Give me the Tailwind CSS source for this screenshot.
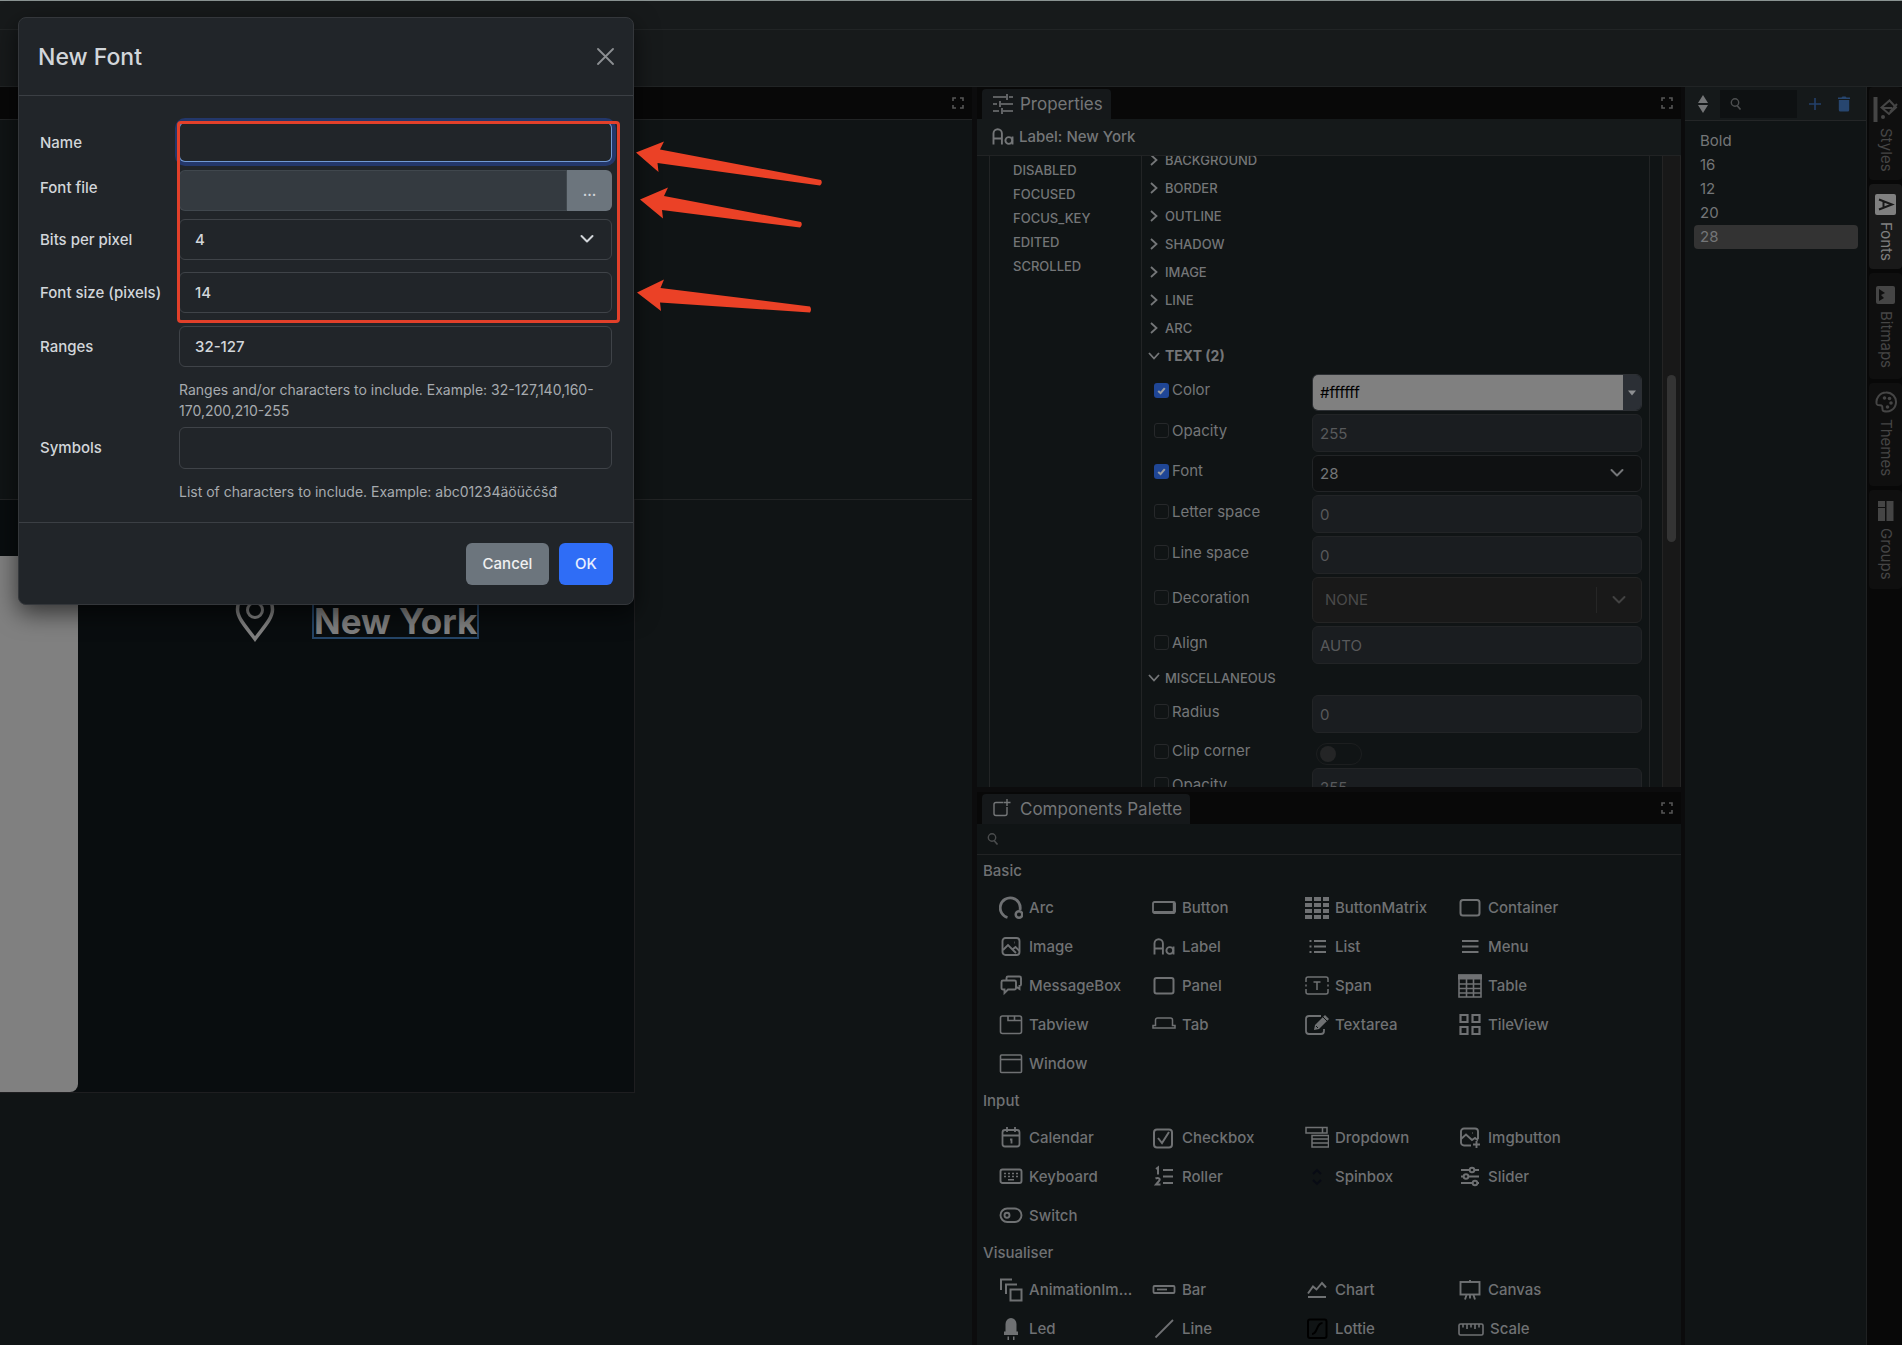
<!DOCTYPE html>
<html lang="en">
<head>
<meta charset="utf-8">
<title>New Font</title>
<script src="https://cdn.jsdelivr.net/npm/@tailwindcss/browser@4"></script>
</head>
<body class="h-screen overflow-hidden bg-[#101415] font-['Inter',sans-serif] text-[15px] leading-6 text-[#747678]">

<svg class="hidden" aria-hidden="true">
  <symbol id="expand" viewBox="0 0 12 12"><path d="M1 4V1h3M8 1h3v3M11 8v3H8M4 11H1V8" fill="none" stroke="currentColor" stroke-width="1.6"/></symbol>
  <symbol id="chev-r" viewBox="0 0 12 12"><path d="M3 1l5.500 5L3 11" fill="none" stroke="currentColor" stroke-width="1.8"/></symbol>
  <symbol id="chev-d" viewBox="0 0 12 12"><path d="M1 3l5 5.500L11 3" fill="none" stroke="currentColor" stroke-width="1.8"/></symbol>
  <symbol id="chev-select" viewBox="0 0 16 16"><path d="M2.500 5l5.500 5.500L13.500 5" fill="none" stroke="currentColor" stroke-width="2" stroke-linecap="round" stroke-linejoin="round"/></symbol>
  <symbol id="search" viewBox="0 0 12 12"><circle cx="5" cy="4.500" r="3.700" fill="none" stroke="currentColor" stroke-width="1.400"/><path d="M7 7.500l3.500 4" stroke="currentColor" stroke-width="1.600"/></symbol>
  <symbol id="label" viewBox="0 0 24 24"><path d="M2.500 19.500V8.500a4.200 4.200 0 0 1 8.400 0v11M2.500 13.500h8.400M21.500 11.500v8" fill="none" stroke="currentColor" stroke-width="1.900"/><circle cx="17.800" cy="15.500" r="3.400" fill="none" stroke="currentColor" stroke-width="1.900"/></symbol>
  <symbol id="check" viewBox="0 0 16 16"><path d="M4.500 8.500l2.500 2.300L11.500 5.500" fill="none" stroke="currentColor" stroke-width="2.200"/></symbol>
</svg>

<div class="flex h-full flex-col border-t border-[#8a9392]">
  <header class="shrink-0 bg-[#171a1b]">
    <div class="h-[29px] border-b border-[#212425]"></div>
    <div class="h-[57px] border-b border-[#212425]"></div>
  </header>

  <main class="flex min-h-0 flex-1">

    <!-- Page editor -->
    <section class="flex min-w-0 flex-1 flex-col">
      <div class="flex h-8 shrink-0 items-center justify-end bg-[#080808] pr-2"><button aria-label="Maximize" class="text-[#565656]"><svg class="size-3"><use href="#expand"/></svg></button></div>
      <div class="h-[381px] shrink-0 border-y border-[#222425]"></div>
      <div class="relative flex-1 overflow-hidden">
        <div class="absolute left-0 top-0 h-[593px] w-[635px] border-b border-r border-[#1e1e20] bg-[#090d0f]">
          <div class="absolute left-0 top-14 h-[536px] w-[78px] rounded-br-lg bg-[#808080]"></div>
          <svg class="absolute left-[235px] top-[90px] h-[52px] w-10 text-[#808080]" viewBox="0 0 40 52"><path d="M20 49C13 39 2.500 29 2.500 19.500a17.500 17.500 0 0 1 35 0C37.500 29 27 39 20 49z" fill="none" stroke="currentColor" stroke-width="3.500"/><circle cx="20" cy="20" r="7.500" fill="none" stroke="currentColor" stroke-width="3"/></svg>
          <div class="absolute left-[312px] top-[101px] h-[38px] border-2 border-[#254567] text-[35px] font-bold leading-9 text-[#808080]">New York</div>
        </div>
      </div>
    </section>

    <div class="w-[5px] shrink-0 bg-[#0c0c0d]"></div>

    <!-- Properties and components -->
    <section class="flex w-[704px] shrink-0 flex-col">
      <div class="flex h-8 shrink-0 items-end bg-[#080808] pl-[5px]">
        <div class="flex h-[30px] items-center gap-1.5 rounded-t bg-[#15181a] pl-2.5 pr-2 text-[17px]">
          <svg class="size-[22px]" viewBox="0 0 22 22"><path d="M1 4h13M17 4h4M15 1v6M1 11h4M9 11h12M8 8v6M1 18h6M11 18h10M10 15v6" fill="none" stroke="currentColor" stroke-width="1.600"/></svg>
          Properties
        </div>
        <button aria-label="Maximize" class="mb-2.5 ml-auto mr-2 text-[#565656]"><svg class="size-3"><use href="#expand"/></svg></button>
      </div>
      <div class="flex h-[37px] shrink-0 items-center gap-1 border-b border-[#212324] bg-[#15191a] pl-3.5 font-medium"><svg class="size-6"><use href="#label"/></svg>Label: New York</div>

      <div class="flex h-[631px] shrink-0 overflow-hidden">
        <ul class="ml-3 w-[153px] shrink-0 border-x border-[#222425] pl-[23px] pt-0.5 text-[13px] font-medium leading-6">
          <li>DISABLED</li><li>FOCUSED</li><li>FOCUS_KEY</li><li>EDITED</li><li>SCROLLED</li>
        </ul>
        <div class="min-w-0 flex-1 border-r border-[#222425] pr-[7px]">
          <div class="-mt-2.5 pl-1.5 text-[13px] font-medium leading-7">
            <div class="flex items-center gap-[5px]"><svg class="size-3"><use href="#chev-r"/></svg>BACKGROUND</div>
            <div class="flex items-center gap-[5px]"><svg class="size-3"><use href="#chev-r"/></svg>BORDER</div>
            <div class="flex items-center gap-[5px]"><svg class="size-3"><use href="#chev-r"/></svg>OUTLINE</div>
            <div class="flex items-center gap-[5px]"><svg class="size-3"><use href="#chev-r"/></svg>SHADOW</div>
            <div class="flex items-center gap-[5px]"><svg class="size-3"><use href="#chev-r"/></svg>IMAGE</div>
            <div class="flex items-center gap-[5px]"><svg class="size-3"><use href="#chev-r"/></svg>LINE</div>
            <div class="flex items-center gap-[5px]"><svg class="size-3"><use href="#chev-r"/></svg>ARC</div>
            <div class="flex items-center gap-[5px] text-sm font-bold leading-7"><svg class="size-3"><use href="#chev-d"/></svg>TEXT (2)</div>
          </div>
          <div class="flex flex-col gap-[3px] pl-3 pt-1">
            <div class="flex h-[37px] items-center">
              <label class="flex w-[158px] items-center gap-[3px] pb-[5px]"><span class="relative size-[15px]"><input type="checkbox" checked class="block size-[15px] appearance-none rounded-[3px] bg-[#1f4696]"><svg class="absolute inset-0 size-[15px] text-[#9a9da2]"><use href="#check"/></svg></span>Color</label>
              <div class="flex h-full flex-1 overflow-hidden rounded-md border border-[#2c2f33]"><input aria-label="Color value" value="#ffffff" class="min-w-0 flex-1 bg-[#808080] pl-[7px] text-black"><button aria-label="Pick color" class="flex w-[18px] items-center justify-center bg-[#2b2f35] text-[#8d8f92]"><svg class="size-2" viewBox="0 0 8 8"><path d="M0 1.500h8L4 6.500z" fill="currentColor"/></svg></button></div>
            </div>
            <div class="flex h-[38px] items-center">
              <label class="flex w-[158px] items-center gap-[3px] pb-[5px]"><input type="checkbox" class="size-[15px] appearance-none rounded-[3px] border border-[#26282a]">Opacity</label>
              <input aria-label="Opacity value" value="255" disabled class="h-full min-w-0 flex-1 rounded-md border border-[#222426] bg-[#1a1d20] pl-[7px] text-[#58595b]">
            </div>
            <div class="flex h-[37px] items-center">
              <label class="flex w-[158px] items-center gap-[3px] pb-[5px]"><span class="relative size-[15px]"><input type="checkbox" checked class="block size-[15px] appearance-none rounded-[3px] bg-[#1f4696]"><svg class="absolute inset-0 size-[15px] text-[#9a9da2]"><use href="#check"/></svg></span>Font</label>
              <div class="relative h-full flex-1"><select aria-label="Font value" class="h-full w-full appearance-none rounded-md border border-[#222426] bg-[#0f1112] pl-[7px]"><option>28</option></select><svg class="pointer-events-none absolute right-[17px] top-2.5 size-4"><use href="#chev-select"/></svg></div>
            </div>
            <div class="flex h-[38px] items-center">
              <label class="flex w-[158px] items-center gap-[3px] pb-[5px]"><input type="checkbox" class="size-[15px] appearance-none rounded-[3px] border border-[#26282a]">Letter space</label>
              <input aria-label="Letter space value" value="0" disabled class="h-full min-w-0 flex-1 rounded-md border border-[#222426] bg-[#1a1d20] pl-[7px] text-[#58595b]">
            </div>
            <div class="flex h-[38px] items-center">
              <label class="flex w-[158px] items-center gap-[3px] pb-[5px]"><input type="checkbox" class="size-[15px] appearance-none rounded-[3px] border border-[#26282a]">Line space</label>
              <input aria-label="Line space value" value="0" disabled class="h-full min-w-0 flex-1 rounded-md border border-[#222426] bg-[#1a1d20] pl-[7px] text-[#58595b]">
            </div>
            <div class="flex h-[46px] items-center">
              <label class="flex w-[158px] items-center gap-[3px] pb-[5px]"><input type="checkbox" class="size-[15px] appearance-none rounded-[3px] border border-[#26282a]">Decoration</label>
              <div class="relative h-full flex-1"><select aria-label="Decoration value" disabled class="h-full w-full appearance-none rounded-md border border-[#242424] bg-[#191919] pl-3 text-[#4a4a4a] opacity-100"><option>NONE</option></select><span class="pointer-events-none absolute inset-y-2.5 right-[45px] w-px bg-[#262626]"></span><svg class="pointer-events-none absolute right-[15px] top-[15px] size-4 text-[#424242]"><use href="#chev-select"/></svg></div>
            </div>
            <div class="flex h-[38px] items-center">
              <label class="flex w-[158px] items-center gap-[3px] pb-[5px]"><input type="checkbox" class="size-[15px] appearance-none rounded-[3px] border border-[#26282a]">Align</label>
              <input aria-label="Align value" value="AUTO" disabled class="h-full min-w-0 flex-1 rounded-md border border-[#222426] bg-[#1a1d20] pl-[7px] text-[#58595b]">
            </div>
          </div>
          <div class="flex items-center gap-[5px] pl-1.5 text-[13px] font-medium leading-7"><svg class="size-3"><use href="#chev-d"/></svg>MISCELLANEOUS</div>
          <div class="flex flex-col gap-[3px] pl-3 pt-[3px]">
            <div class="flex h-[38px] items-center">
              <label class="flex w-[158px] items-center gap-[3px] pb-[5px]"><input type="checkbox" class="size-[15px] appearance-none rounded-[3px] border border-[#26282a]">Radius</label>
              <input aria-label="Radius value" value="0" disabled class="h-full min-w-0 flex-1 rounded-md border border-[#222426] bg-[#1a1d20] pl-[7px] text-[#58595b]">
            </div>
            <div class="flex h-[29px] items-end">
              <label class="flex w-[158px] items-center gap-[3px] pb-0.5"><input type="checkbox" class="size-[15px] appearance-none rounded-[3px] border border-[#26282a]">Clip corner</label>
              <span class="relative ml-1 h-[22px] w-[46px]"><input type="checkbox" aria-label="Clip corner value" disabled class="block h-full w-full appearance-none rounded-full border border-[#1c1e1f]"><span class="absolute left-1 top-[3px] size-4 rounded-full bg-[#242526]"></span></span>
            </div>
            <div class="flex h-[38px] items-center">
              <label class="flex w-[158px] items-center gap-[3px] pb-[5px]"><input type="checkbox" class="size-[15px] appearance-none rounded-[3px] border border-[#26282a]">Opacity</label>
              <input aria-label="Opacity value" value="255" disabled class="h-full min-w-0 flex-1 rounded-md border border-[#222426] bg-[#1a1d20] pl-[7px] text-[#58595b]">
            </div>
          </div>
        </div>
        <div class="ml-3 w-[19px] shrink-0 border-x border-[#242424] bg-[#181818] px-1 pt-[219px]"><div class="h-[167px] rounded-full bg-[#343434]"></div></div>
      </div>

      <div class="h-[5px] shrink-0 bg-[#0c0c0d]"></div>
      <div class="flex h-8 shrink-0 items-end bg-[#080808] pl-[5px]">
        <div class="flex h-[30px] items-center gap-1.5 rounded-t bg-[#15181a] pl-2.5 pr-2 text-[17px]">
          <svg class="size-[22px]" viewBox="0 0 22 22"><path d="M11 4.500H4a2 2 0 0 0-2 2v9a2 2 0 0 0 2 2h9a2 2 0 0 0 2-2V9M15 1v7M11.500 4.500h7" fill="none" stroke="currentColor" stroke-width="1.400"/></svg>
          Components Palette
        </div>
        <button aria-label="Maximize" class="mb-2.5 ml-auto mr-2 text-[#565656]"><svg class="size-3"><use href="#expand"/></svg></button>
      </div>
      <div class="flex h-[31px] shrink-0 items-center gap-2 border-b border-[#212324] pl-2.5"><svg class="size-3 text-[#4a4c4d]"><use href="#search"/></svg><input aria-label="Search components" class="min-w-0 flex-1 bg-transparent"></div>

      <div class="min-h-0 flex-1 overflow-hidden font-medium text-[#6f7173]">
        <h3 class="h-[33px] pl-1.5 leading-8">Basic</h3>
        <ul class="grid grid-cols-[repeat(4,153px)] pb-0.5 pl-[22px] leading-[39px]">
          <li class="flex items-center gap-1.5"><svg class="size-6" viewBox="0 0 24 24" fill="none" stroke="currentColor" stroke-width="2.800"><path d="M8.500 21.500A10 10 0 1 1 21 14"/><circle cx="20" cy="18.500" r="3.300" stroke-width="2.500"/></svg>Arc</li>
          <li class="flex items-center gap-1.5"><svg class="size-6" viewBox="0 0 24 24" fill="none" stroke="currentColor"><rect x="1" y="6" width="22" height="11" rx="1.500" stroke-width="1.800"/><path d="M2 16.500h20.500M22.300 7v9" stroke-width="3"/></svg>Button</li>
          <li class="flex items-center gap-1.5"><svg class="size-6" viewBox="0 0 24 24" stroke="currentColor" stroke-width="4"><path d="M0 3h7M9 3h7M18 3h6M0 9h7M9 9h7M18 9h6M0 15h7M9 15h7M18 15h6M0 21h7M9 21h7M18 21h6"/></svg>ButtonMatrix</li>
          <li class="flex items-center gap-1.5"><svg class="size-6" viewBox="0 0 24 24" fill="none" stroke="currentColor" stroke-width="2"><rect x="2.500" y="4" width="19" height="15.500" rx="2.500"/></svg>Container</li>
          <li class="flex items-center gap-1.5"><svg class="size-6" viewBox="0 0 24 24" fill="none" stroke="currentColor" stroke-width="1.900"><rect x="3.500" y="3" width="17" height="17" rx="3"/><path d="M4 15l5-5 8 8M14 14l2.500-2 4 4M15 7.500h.500"/></svg>Image</li>
          <li class="flex items-center gap-1.5"><svg class="size-6"><use href="#label"/></svg>Label</li>
          <li class="flex items-center gap-1.5"><svg class="size-6" viewBox="0 0 24 24" stroke="currentColor" stroke-width="2"><path d="M9 6h12M9 11.500h12M9 17h12M4.500 6h2M4.500 11.500h2M4.500 17h2"/></svg>List</li>
          <li class="flex items-center gap-1.5"><svg class="size-6" viewBox="0 0 24 24" stroke="currentColor" stroke-width="2"><path d="M4 6h16.500M4 11.500h16.500M4 17h16.500"/></svg>Menu</li>
          <li class="flex items-center gap-1.5"><svg class="size-6" viewBox="0 0 24 24" fill="none" stroke="currentColor" stroke-width="1.900"><path d="M4 6.500h11.500a1.500 1.500 0 0 1 1.500 1.500v6a1.500 1.500 0 0 1-1.500 1.500H9L5.500 19v-3.500H4A1.500 1.500 0 0 1 2.500 14V8A1.500 1.500 0 0 1 4 6.500zM7.500 6V4A1.500 1.500 0 0 1 9 2.500h11.500A1.500 1.500 0 0 1 22 4v6.500a1.500 1.500 0 0 1-1.500 1.500v3l-3-2"/></svg>MessageBox</li>
          <li class="flex items-center gap-1.5"><svg class="size-6" viewBox="0 0 24 24" fill="none" stroke="currentColor" stroke-width="2"><rect x="2.500" y="4" width="19" height="15.500" rx="2"/></svg>Panel</li>
          <li class="flex items-center gap-1.5"><svg class="size-6" viewBox="0 0 24 24" fill="none" stroke="currentColor" stroke-width="1.500"><path d="M1 8V5a2 2 0 0 1 2-2h18a2 2 0 0 1 2 2v3M1 15v3a2 2 0 0 0 2 2h18a2 2 0 0 0 2-2v-3M1 10.500v2M23 10.500v2M8.500 8h7M12 8v8"/></svg>Span</li>
          <li class="flex items-center gap-1.5"><svg class="size-6" viewBox="0 0 24 24" fill="none" stroke="currentColor" stroke-width="1.600"><path d="M1 1h22v22H1zM1 10h22M1 14.500h22M1 19h22M8.500 5v18M15.500 5v18"/><path d="M0 3h24" stroke-width="5"/></svg>Table</li>
          <li class="flex items-center gap-1.5"><svg class="size-6" viewBox="0 0 24 24" fill="none" stroke="currentColor" stroke-width="1.600"><rect x="1.500" y="3" width="21" height="17.500" rx="2"/><path d="M9 3v4.500h13.500M15.500 3v4.500"/></svg>Tabview</li>
          <li class="flex items-center gap-1.5"><svg class="size-6" viewBox="0 0 24 24" fill="none" stroke="currentColor" stroke-width="1.500"><path d="M3.500 12.500V7a2 2 0 0 1 2-2h13a2 2 0 0 1 2 2v5.500h2.500V15H1v-2.500z"/></svg>Tab</li>
          <li class="flex items-center gap-1.5"><svg class="size-6" viewBox="0 0 24 24" fill="none" stroke="currentColor" stroke-width="1.800"><path d="M16 3H4a3 3 0 0 0-3 3v12a3 3 0 0 0 3 3h12a3 3 0 0 0 3-3v-2"/><path d="M9 17l1-5L20 2l4 4-10 10z" fill="currentColor" stroke="none"/><path d="M18 4l4 4M11 13l2 2" stroke="#101415" stroke-width="1"/></svg>Textarea</li>
          <li class="flex items-center gap-1.5"><svg class="size-6" viewBox="0 0 24 24" fill="none" stroke="currentColor" stroke-width="2.200"><path d="M2.500 2h7v7h-7zM14.500 2h7v7h-7zM2.500 14h7v7h-7zM14.500 14h7v7h-7z"/></svg>TileView</li>
          <li class="flex items-center gap-1.5"><svg class="size-6" viewBox="0 0 24 24" fill="none" stroke="currentColor" stroke-width="1.600"><rect x="1.500" y="3" width="21" height="17.500" rx="1"/><path d="M1.500 7.500h21"/></svg>Window</li>
        </ul>
        <h3 class="h-[33px] pl-1.5 leading-8">Input</h3>
        <ul class="grid grid-cols-[repeat(4,153px)] pb-0.5 pl-[22px] leading-[39px]">
          <li class="flex items-center gap-1.5"><svg class="size-6" viewBox="0 0 24 24" fill="none" stroke="currentColor" stroke-width="1.800"><rect x="3.500" y="4" width="17" height="16.500" rx="2.500"/><path d="M3.500 9.500h17M8 1v5M16 1v5M11 13.500h1.500v4"/></svg>Calendar</li>
          <li class="flex items-center gap-1.5"><svg class="size-6" viewBox="0 0 24 24" fill="none" stroke="currentColor" stroke-width="2"><rect x="2" y="3.500" width="18" height="18" rx="3"/><path d="M6 12l4 5 7-11"/></svg>Checkbox</li>
          <li class="flex items-center gap-1.5"><svg class="size-6" viewBox="0 0 24 24" fill="none" stroke="currentColor" stroke-width="1.500"><path d="M1 1.500h21v5.500H1zM17.500 2v5M7 9.500h16.500V21H7zM7 13h16.500M7 17h16.500"/></svg>Dropdown</li>
          <li class="flex items-center gap-1.5"><svg class="size-6" viewBox="0 0 24 24" fill="none" stroke="currentColor" stroke-width="1.900"><path d="M13 19.500H6a3 3 0 0 1-3-3v-11a3 3 0 0 1 3-3h11a3 3 0 0 1 3 3V13M3 13l5-4.500L14 14l3-2 3 2.500M14.500 7h.500M18.500 15v7M15 18.500h7"/></svg>Imgbutton</li>
          <li class="flex items-center gap-1.5"><svg class="size-6" viewBox="0 0 24 24" fill="none" stroke="currentColor" stroke-width="1.900"><rect x="1.500" y="4.500" width="21" height="13.500" rx="2"/><path d="M5 8.500h2M9 8.500h2M13 8.500h2M17 8.500h2M5 11.500h2M9 11.500h2M13 11.500h2M17 11.500h2M9 14.800h6" stroke-width="1.600"/></svg>Keyboard</li>
          <li class="flex items-center gap-1.5"><svg class="size-6" viewBox="0 0 24 24" fill="none" stroke="currentColor" stroke-width="1.800"><path d="M11 5h10M11 11.500h10M11 18h10"/><path d="M4 4l2-1.500V9.500M3.500 13.500c3-1.500 5.500.500 3.500 2.500l-3 3.500h4.500" stroke-width="2"/></svg>Roller</li>
          <li class="flex items-center gap-1.5"><svg class="size-6" viewBox="0 0 24 24" fill="none" stroke="#080b14" stroke-width="1.800"><path d="M8 9l4-4 4 4M8 15l4 4 4-4"/></svg>Spinbox</li>
          <li class="flex items-center gap-1.5"><svg class="size-6" viewBox="0 0 24 24" fill="none" stroke="currentColor" stroke-width="1.900"><path d="M3 5h8M17 5h4M3 11.500h2M11 11.500h10M3 18h11M20 18h1"/><circle cx="14" cy="5" r="2.300"/><circle cx="8" cy="11.500" r="2.300"/><circle cx="17" cy="18" r="2.300"/></svg>Slider</li>
          <li class="flex items-center gap-1.5"><svg class="size-6" viewBox="0 0 24 24" fill="none" stroke="currentColor" stroke-width="1.900"><rect x="1.500" y="4.500" width="21" height="13.500" rx="6.700"/><circle cx="8" cy="11.200" r="2.500"/></svg>Switch</li>
        </ul>
        <h3 class="h-[33px] pl-1.5 leading-8">Visualiser</h3>
        <ul class="grid grid-cols-[repeat(4,153px)] pb-0.5 pl-[22px] leading-[39px]">
          <li class="flex items-center gap-1.5"><svg class="size-6" viewBox="0 0 24 24" fill="none" stroke="currentColor" stroke-width="2"><path d="M11.500 11.500h11v11h-11zM7 16V6.500h11M2 12V1.500h11"/></svg>AnimationIm...</li>
          <li class="flex items-center gap-1.5"><svg class="size-6" viewBox="0 0 24 24" fill="none" stroke="currentColor" stroke-width="1.800"><rect x="1.500" y="8" width="21" height="7" rx="1"/><path d="M5 11.500h10"/></svg>Bar</li>
          <li class="flex items-center gap-1.5"><svg class="size-6" viewBox="0 0 24 24" fill="none" stroke="currentColor" stroke-width="1.900"><path d="M3 15.500l5-7 3.500 3L17 5l4 4.500M3 19h18"/></svg>Chart</li>
          <li class="flex items-center gap-1.5"><svg class="size-6" viewBox="0 0 24 24" fill="none" stroke="currentColor" stroke-width="1.900"><rect x="2.500" y="4" width="19" height="12.500"/><path d="M12 2v2M8.500 17l-1.500 4.500M15.500 17l1.500 4.500M12 17v3.500"/></svg>Canvas</li>
          <li class="flex items-center gap-1.5"><svg class="size-6" viewBox="0 0 24 24" fill="currentColor"><path d="M6.500 14.500V7a5.500 6 0 0 1 11 0v7.500h1.500V18H5v-3.500zM8.500 19.500H10V23H8.500zM14 19.500h1.500V23H14z"/></svg>Led</li>
          <li class="flex items-center gap-1.5"><svg class="size-6" viewBox="0 0 24 24" stroke="currentColor" stroke-width="1.800"><path d="M3.500 20.500L21 3"/></svg>Line</li>
          <li class="flex items-center gap-1.5"><svg class="size-6" viewBox="0 0 24 24" fill="none" stroke="#000" stroke-width="2"><rect x="3" y="2.500" width="18.500" height="18.500" rx="2"/><path d="M7 17c6 0 4-11 10.500-11"/></svg>Lottie</li>
          <li class="flex items-center gap-1.5"><svg class="h-6 w-[26px]" viewBox="0 0 26 24" fill="none" stroke="currentColor" stroke-width="1.600"><rect x="1" y="7" width="24" height="11" rx="1.500"/><path d="M5 7v3.500M9 7v5M13 7v3.500M17 7v5M21 7v3.500"/></svg>Scale</li>
        </ul>
      </div>
    </section>

    <div class="w-1 shrink-0 bg-[#0b0b0c]"></div>

    <!-- Font list -->
    <section class="flex w-[182px] shrink-0 flex-col border-r border-[#1f2122]">
      <div class="flex h-[34px] shrink-0 items-center border-b border-[#242627] bg-[#15191a] pl-2">
        <button aria-label="Sort" class="flex w-[27px] items-center pl-1"><svg class="h-5 w-3" viewBox="0 0 12 20" fill="currentColor"><path d="M6 1l5 8H1zM6 19l5-8H1z"/></svg></button>
        <div class="flex h-7 w-[77px] items-center bg-[#0e1112] pl-2.5 text-[#4d4f50]"><svg class="size-3"><use href="#search"/></svg><input aria-label="Search fonts" class="min-w-0 flex-1 bg-transparent"></div>
        <button aria-label="Add font" class="ml-3 text-[#23406b]"><svg class="size-3" viewBox="0 0 12 12"><path d="M6 0v12M0 6h12" stroke="currentColor" stroke-width="1.600"/></svg></button>
        <button aria-label="Delete font" class="ml-4 text-[#27466f]"><svg class="h-4 w-3.5" viewBox="0 0 14 16" fill="currentColor"><path d="M1 1.500h3.500L5.500.500h3l1 1H13V3H1zM1.800 4h10.400v10a1.500 1.500 0 0 1-1.500 1.500H3.300A1.500 1.500 0 0 1 1.800 14z"/></svg></button>
      </div>
      <ul class="pl-[9px] pr-2 pt-2 leading-6">
        <li class="rounded px-1.5">Bold</li>
        <li class="rounded px-1.5">16</li>
        <li class="rounded px-1.5">12</li>
        <li class="rounded px-1.5">20</li>
        <li class="rounded bg-[#333] px-1.5">28</li>
      </ul>
    </section>

    <!-- Vertical tabs -->
    <nav class="flex w-[35px] shrink-0 flex-col gap-1 bg-[#080808] pl-0.5 text-[#454545]">
      <button class="flex h-[93px] items-center gap-1.5 rounded bg-[#0f0f0f] pt-2.5 [writing-mode:vertical-rl]"><svg class="size-[25px]" viewBox="0 0 25 25" fill="none" stroke="currentColor" stroke-width="2"><path d="M2.500 0v25" stroke-width="4"/><path d="M8.500 10.500l8-7 6.500 7-7 6.500zM17 15l7-8M10 11h9"/><circle cx="10" cy="20" r="2" fill="currentColor" stroke="none"/></svg>Styles</button>
      <button class="flex h-[85px] items-center gap-1.5 rounded bg-[#191919] pt-2.5 text-[#808080] [writing-mode:vertical-rl]"><svg class="size-[22px]" viewBox="0 0 22 22"><rect width="21" height="21" rx="2" fill="currentColor"/><path d="M4 5.500l13 5-13 5M8.500 7.500v6" fill="none" stroke="#191919" stroke-width="2"/></svg>Fonts</button>
      <button class="flex h-[106px] items-center gap-1.5 rounded bg-[#0f0f0f] pt-3 [writing-mode:vertical-rl]"><svg class="size-5" viewBox="0 0 20 20"><rect y="1" width="19" height="18" rx="2" fill="currentColor"/><path d="M3 4v12l5-3-3-3 4-2z" fill="#0f0f0f"/></svg>Bitmaps</button>
      <button class="flex h-[103px] items-center gap-1.5 rounded bg-[#0f0f0f] pt-2 [writing-mode:vertical-rl]"><svg class="size-[22px]" viewBox="0 0 22 22" fill="none" stroke="currentColor" stroke-width="2"><path d="M11 1.500A9.500 9.500 0 1 1 8.500 20c-2-1-.500-3.500-1.500-5s-4.500.500-5.300-2A9.500 9.500 0 0 1 11 1.500z"/><g fill="currentColor" stroke="none"><circle cx="9.500" cy="7" r="1.800"/><circle cx="14.500" cy="7.500" r="1.800"/><circle cx="16" cy="12" r="1.800"/><circle cx="12.500" cy="16" r="1.800"/></g></svg>Themes</button>
      <button class="flex h-[99px] items-center gap-1.5 rounded bg-[#0f0f0f] pt-2.5 [writing-mode:vertical-rl]"><svg class="size-[22px]" viewBox="0 0 22 22" fill="currentColor"><path d="M3 1h7v6H3zM3 8h7v13H3zM11.500 1h7v20h-7z"/></svg>Groups</button>
    </nav>
  </main>
</div>

<!-- New Font dialog -->
<form role="dialog" aria-labelledby="dialog-title" class="absolute left-[18px] top-[17px] w-[616px] rounded-lg border border-[#34373b] bg-[#212529] font-medium text-[#d2d6da] shadow-[0_8px_24px_rgba(0,0,0,0.6)]">
  <div class="flex h-[78px] items-center justify-between border-b border-[#3b3f44] px-[19px]">
    <h2 id="dialog-title" class="text-[23px]">New Font</h2>
    <button type="button" aria-label="Close" class="text-[#8c8f92]"><svg class="size-[17px]" viewBox="0 0 17 17"><path d="M1 1l15 15M16 1L1 16" stroke="currentColor" stroke-width="1.800" stroke-linecap="round"/></svg></button>
  </div>
  <div class="grid grid-cols-[139px_1fr] pb-5 pl-[21px] pr-[21px] pt-[26px]">
    <label for="name" class="h-[48px] pt-[9px]">Name</label>
    <div><input id="name" class="h-10 w-full rounded-md border border-[#86b7fe]/80 bg-[#212529] px-4 ring-4 ring-[#23376a] outline-none"></div>
    <label for="file" class="pt-1.5">Font file</label>
    <div class="flex h-[49px] items-start"><input id="file" readonly class="h-[41px] min-w-0 flex-1 rounded-l-md border border-[#495057]/60 bg-[#343a40] px-4"><button type="button" class="h-[41px] w-[45px] rounded-r-md bg-[#6c757d]">...</button></div>
    <label for="bits" class="pt-[9px]">Bits per pixel</label>
    <div class="relative h-[53px]"><select id="bits" class="h-[41px] w-full appearance-none rounded-md border border-[#3f4348] bg-[#212529] px-[15px]"><option>4</option></select><svg class="pointer-events-none absolute right-[17px] top-3 size-4"><use href="#chev-select"/></svg></div>
    <label for="size" class="pt-[9px]">Font size (pixels)</label>
    <div class="h-[54px]"><input id="size" value="14" class="h-[41px] w-full rounded-md border border-[#3f4348] bg-[#212529] px-[15px]"></div>
    <label for="ranges" class="pt-[9px]">Ranges</label>
    <div><input id="ranges" value="32-127" class="h-[41px] w-full rounded-md border border-[#3f4348] bg-[#212529] px-[15px]"><p class="mb-1.5 mt-3 text-sm font-normal leading-[21px] text-[#a7abaf]">Ranges and/or characters to include. Example: 32-127,140,160-170,200,210-255</p></div>
    <label for="symbols" class="pt-[9px]">Symbols</label>
    <div><input id="symbols" class="h-[42px] w-full rounded-md border border-[#3f4348] bg-[#212529] px-[15px]"><p class="mt-3 text-sm font-normal leading-[21px] text-[#a7abaf]">List of characters to include. Example: abc01234äöüčćšđ</p></div>
  </div>
  <div class="flex h-[82px] items-center justify-end gap-2.5 border-t border-[#3b3f44] px-5">
    <button type="button" class="h-[42px] w-[83px] rounded-md bg-[#6c757d] text-white/90">Cancel</button>
    <button type="submit" class="h-[42px] w-[54px] rounded-md bg-[#2f6df6] text-white/90">OK</button>
  </div>
</form>

<!-- Annotations -->
<div class="pointer-events-none absolute left-[177px] top-[121px] h-[202px] w-[443px] rounded border-3 border-[#e2402a]"></div>
<svg class="pointer-events-none absolute left-[630px] top-[130px] h-[190px] w-[200px]" viewBox="630 130 200 190" fill="#eb4126"><path d="M636 152.500l28-11-4 8 161 30.500q2 3-1 5.500L657.500 163l1 9zM640 199.500l28-12-4 8.500 137 26q2 3-1 5.500L662 210l1 8.500zM637 292.500l27-13-3.500 8.500 149.500 18.500q2 3 0 6l-150-10 1 8.500z"/></svg>

</body>
</html>
